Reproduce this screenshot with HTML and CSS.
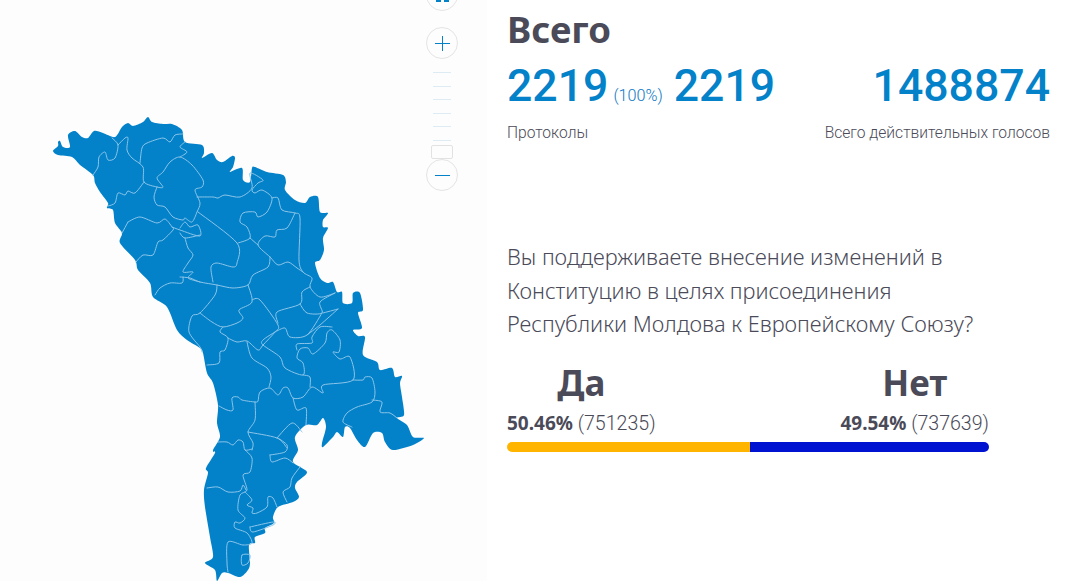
FILE: index.html
```html
<!DOCTYPE html>
<html lang="ru">
<head>
    <meta charset="UTF-8">
    <meta name="viewport" content="width=device-width, initial-scale=1.0">
    <title>Всего</title>
    <link rel="stylesheet" href="styles.css">
</head>
<body>
    <div class="page">
        <div class="map-panel">
            <svg class="map" viewBox="0 0 487 581" width="487" height="581">
                <path class="land smooth" d="M53 151L58 146L58 142L60 141L63 147L70 147L68 135L75 131L82 137L88 138L94 131L103 133L115 137L122 127L128 123L133 126L143 122L148 117L152 122L163 124L172 124L182 130L185 142L202 145L204 153L202 158L212 153L217 160L223 162L232 156L235 158L233 167L230 172L242 168L243 180L250 182L252 168L255 167L267 172L283 175L286 182L285 190L295 200L305 203L310 197L318 197L320 212L328 213L323 220L323 227L328 228L323 238L324 250L320 260L315 263L320 278L327 283L333 282L337 292L342 292L343 303L352 303L353 293L360 293L363 310L358 313L362 328L353 330L358 336L365 337L363 355L377 362L380 370L392 368L395 377L402 376L400 383L402 397L404 415L397 418L407 425L413 437L424 438L413 445L393 450L385 442L382 433L373 433L365 447L357 440L350 428L345 427L343 437L337 432L333 437L323 447L322 443L326 427L323 418L317 425L306 425L295 437L298 450L293 462L307 472L297 482L295 488L299 497L293 502L278 507L273 517L274 523L265 528L265 533L255 537L255 543L249 545L250 563L248 570L240 577L228 573L222 573L217 581L215 570L205 563L213 557L210 537L205 507L204 490L208 473L206 468L215 453L213 450L220 437L217 423L218 405L213 383L207 373L203 353L200 348L187 340L177 330L167 307L153 297L150 283L138 270L135 260L120 243L122 233L115 223L113 210L107 208L108 203L100 192L95 183L93 175L80 165L72 157L58 155Z"/>
                <path class="border smooth" d="M112 138L118 145L115 158L108 160L105 152L99 157L98 167L93 175M118 145L125 138L128 138L127 150L132 158L143 167L144 182L157 187L163 187L157 178L163 172L170 162L180 157L192 165L203 180L202 187L195 190L200 203L197 212L192 222L185 218L183 220L173 217L165 207L157 205L154 197L157 187M144 182L135 193L128 191L125 195L118 193L115 203L108 206M140 163L142 148L147 143L163 138L170 142L175 135L183 134M185 142L180 147L187 152L180 157M197 197L213 197L218 198L225 195L240 197L252 188L250 173L263 180L258 183L252 190L255 193L262 190L272 198L267 212L258 217L255 212L243 213L240 222L247 227L250 238L238 243M272 198L278 198L282 210L295 213L300 218L299 260L303 272L312 278L310 287L320 297L335 293M295 213L287 228L277 230L275 237L265 236L258 245L270 257L278 265L288 262L297 268L303 272M250 238L258 245M198 212L237 243L237 263L233 267L217 263L211 267L213 282M270 257L268 267L253 275L248 285L233 288L217 285L200 282L190 278L180 277M128 222L140 217L157 223L165 219L172 227L173 230L163 240L158 242L153 255L143 255L136 262M128 222L122 233M172 227L180 230L200 236L198 225L190 227L185 222L180 228M180 233L185 238L200 235M185 238L188 248L193 255L188 263L183 272L193 272L188 278L200 282M183 277L182 283L170 283L160 288L155 295M217 285L215 295L200 313L192 316L189 332L200 347L202 352M200 313L212 322L223 327L237 323L243 318L239 310L252 302L248 285M223 327L220 332L228 338L225 350L220 352L219 363L207 365M228 338L237 342L247 341L258 350L263 345L275 332L278 325L260 300L252 300M278 323L277 312L300 304L302 292L310 287M300 304L307 313L322 313L320 302L335 293M322 313L307 335L290 337L285 328L275 332M338 309L320 325L307 335M338 309L323 313M332 327L320 327L312 337L312 343L297 344L297 350M275 332L263 340L263 345L280 357L285 368L303 375L303 363L297 358L300 349L308 348L313 354L325 343L327 333L332 330L340 340L339 352L333 352L340 359L350 357L353 380L323 385L323 393L312 387L303 397L293 398L288 388L283 388L278 395L270 388L260 392L258 401L255 402L242 400L238 397L232 398L233 410L227 410L219 406M303 375L310 377L310 387M247 342L252 358L267 368L271 377L269 387M353 380L363 380L365 377L372 378L375 392L372 402L357 407L347 413L343 422L352 427M372 400L382 402L380 412L390 413L397 418M293 398L297 410L306 408L306 425M255 402L255 420L248 432L253 443L252 450M248 432L277 438L287 448M277 438L292 423L302 432M218 442L227 442L233 445L238 440L243 442L245 450L252 449M245 450L252 458L250 472L243 475L247 490L240 495L238 510L245 518L240 523L235 522L235 528L247 533L252 543L243 545L228 542L227 563L228 572M207 488L218 487L228 492L240 491L243 485L246 490M245 492L252 500L247 505L253 508L252 513L257 513L267 507L268 497L273 498L277 507M250 527L273 522L273 525L253 532L250 527M270 455L285 452L287 445L278 438M270 455L272 462L285 458L293 463M300 467L292 478L290 487L283 492L287 502M242 555L250 555L248 563L242 565Z"/>
            </svg>
            <div class="zoom-controls">
                <div class="round-btn round-top">
                    <span class="dots"><i></i><i></i></span>
                </div>
                <div class="round-btn round-plus">
                    <svg viewBox="0 0 16 16" width="16" height="16"><path d="M1 8.5H16M8.5 1V16"/></svg>
                </div>
                <div class="ticks"><i></i><i></i><i></i><i></i><i></i><i></i></div>
                <div class="handle"></div>
                <div class="round-btn round-minus">
                    <svg viewBox="0 0 16 16" width="16" height="16"><path d="M1 8.5H16"/></svg>
                </div>
            </div>
        </div>
        <div class="info">
            <h1>Всего</h1>
            <div class="stats">
                <div class="stat">
                    <div class="stat-row"><span class="num">2219</span><span class="pct">(100%)</span><span class="num">2219</span></div>
                    <div class="label">Протоколы</div>
                </div>
                <div class="stat stat-right">
                    <div class="stat-row"><span class="num">1488874</span></div>
                    <div class="label">Всего действительных голосов</div>
                </div>
            </div>
            <p class="question">Вы поддерживаете внесение изменений в Конституцию в целях присоединения Республики Молдова к Европейскому Союзу?</p>
            <div class="results">
                <div class="options">
                    <div class="option">
                        <div class="option-name">Да</div>
                        <div class="option-val"><strong>50.46%</strong> (751235)</div>
                    </div>
                    <div class="option">
                        <div class="option-name">Нет</div>
                        <div class="option-val"><strong>49.54%</strong> (737639)</div>
                    </div>
                </div>
                <div class="bar">
                    <div class="bar-yes" style="width: 50.46%"></div>
                    <div class="bar-no" style="width: 49.54%"></div>
                </div>
            </div>
        </div>
    </div>
    <script src="map.js"></script>
</body>
</html>
```

FILE: styles.css
```css
html, body {
    margin: 0;
    height: 100%;
    overflow: hidden;
    background-color: #fff;
}

body {
    font-family: Roboto, sans-serif;
    color: #4a4a58;
}

.page {
    display: flex;
    height: 581px;
}

.map-panel {
    position: relative;
    width: 487px;
    flex-shrink: 0;
    background-color: #fdfdfd;
}

.map {
    position: absolute;
    left: 0;
    top: 0;
}

.land {
    fill: #0382c9;
}

.border {
    fill: none;
    stroke: #8cc5ea;
    stroke-width: 1;
    stroke-linejoin: round;
    stroke-linecap: round;
}

.zoom-controls {
    position: absolute;
    left: 426px;
    top: -21px;
    width: 32px;
}

.round-btn {
    width: 30px;
    height: 30px;
    border: 1px solid #e4e4e4;
    border-radius: 50%;
    background-color: #fdfdfd;
    display: flex;
    align-items: center;
    justify-content: center;
}

.round-btn svg {
    stroke: #0382c9;
    stroke-width: 1;
}

.round-top {
    align-items: flex-end;
}

.dots {
    display: flex;
    gap: 3px;
    margin-bottom: 8px;
}

.dots i {
    display: block;
    width: 5px;
    height: 3px;
    background-color: #0382c9;
}

.round-plus {
    margin-top: 16px;
}

.ticks {
    display: flex;
    flex-direction: column;
    gap: 12.6px;
    align-items: center;
    margin-top: 13px;
}

.ticks i {
    display: block;
    width: 18px;
    height: 1px;
    background-color: #dcebf4;
}

.handle {
    width: 20px;
    height: 12px;
    margin: 4px auto 0;
    border: 1px solid #e2e2e2;
    border-radius: 2px;
    background-color: #fdfdfd;
}

.round-minus {
    position: relative;
}

.info {
    width: 543px;
    margin-left: 20px;
}

h1 {
    margin: 0;
    padding-top: 6px;
    font-family: "Noto Sans", sans-serif;
    font-size: 36.5px;
    font-weight: 700;
    line-height: 46px;
}

.stats {
    display: flex;
    justify-content: space-between;
    margin-top: 4px;
}

.stat-row {
    display: flex;
    align-items: baseline;
    height: 60px;
}

.num {
    font-size: 44.6px;
    font-weight: 500;
    line-height: 60px;
    color: #0382c9;
}

.pct {
    margin: 0 11px 0 5px;
    font-size: 16.2px;
    font-weight: 300;
    color: #0a78c4;
}

.label {
    margin-top: 7px;
    font-size: 15.6px;
    font-weight: 300;
    line-height: 20px;
}

.stat-right {
    text-align: right;
}

.stat-right .stat-row {
    justify-content: flex-end;
}

.question {
    width: 480px;
    margin: 97px 0 0;
    font-family: "Noto Sans", sans-serif;
    font-size: 21.8px;
    font-weight: 300;
    line-height: 33.5px;
}

.results {
    width: 482px;
    margin-top: 20px;
}

.options {
    display: flex;
    justify-content: space-between;
}

.option {
    text-align: center;
}

.option-name {
    font-family: "Noto Sans", sans-serif;
    font-size: 35px;
    font-weight: 700;
    line-height: 44px;
}

.option-val {
    margin-top: 6px;
    font-size: 19.6px;
    font-weight: 300;
    line-height: 24px;
}

.option-val strong {
    font-family: "Noto Sans", sans-serif;
    font-size: 19px;
    font-weight: 700;
}

.bar {
    display: flex;
    height: 10px;
    margin-top: 6px;
    border-radius: 5px;
    overflow: hidden;
}

.bar-yes {
    background-color: #ffb500;
}

.bar-no {
    background-color: #0013d0;
}
```

FILE: map.js
```js
// Round off the traced map lines: each run of points becomes a Catmull-Rom curve
document.querySelectorAll('.smooth').forEach((path) => {
    const runs = path.getAttribute('d').split('M').filter(Boolean);
    let d = '';

    runs.forEach((run) => {
        const closed = run.includes('Z');
        const pts = run.replace('Z', '').split('L').map((p) => p.trim().split(' ').map(Number));
        const n = pts.length;
        const at = (i) => (closed ? pts[(i + n) % n] : pts[Math.min(n - 1, Math.max(0, i))]);
        const last = closed ? n : n - 1;

        d += `M${pts[0][0]} ${pts[0][1]}`;
        for (let i = 0; i < last; i++) {
            const p0 = at(i - 1), p1 = at(i), p2 = at(i + 1), p3 = at(i + 2);
            const c1x = p1[0] + (p2[0] - p0[0]) / 7;
            const c1y = p1[1] + (p2[1] - p0[1]) / 7;
            const c2x = p2[0] - (p3[0] - p1[0]) / 7;
            const c2y = p2[1] - (p3[1] - p1[1]) / 7;
            d += `C${c1x.toFixed(1)} ${c1y.toFixed(1)} ${c2x.toFixed(1)} ${c2y.toFixed(1)} ${p2[0]} ${p2[1]}`;
        }
        if (closed) d += 'Z';
    });

    path.setAttribute('d', d);
});
```
